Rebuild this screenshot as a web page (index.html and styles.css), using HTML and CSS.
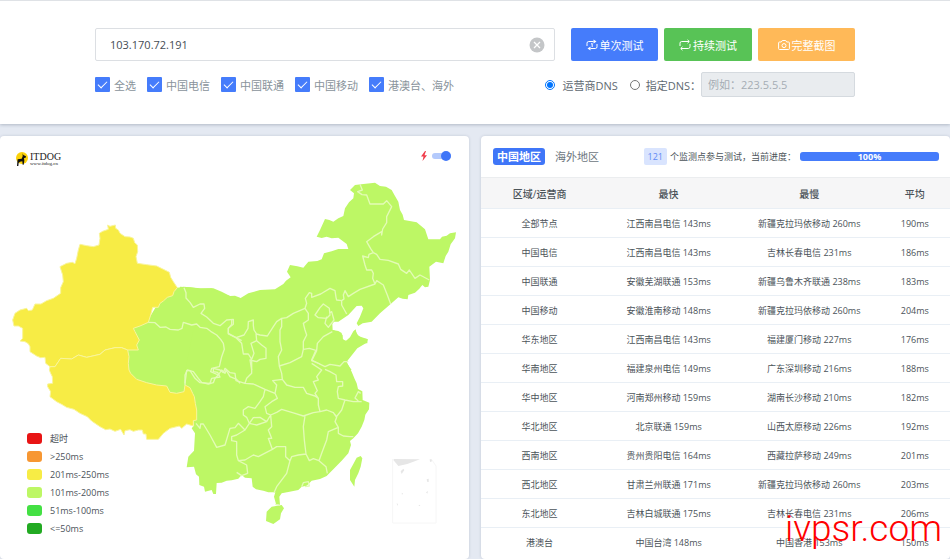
FILE: index.html
```
<!DOCTYPE html>
<html lang="zh-CN">
<head>
    <meta charset="UTF-8">
    <meta name="viewport" content="width=device-width, initial-scale=1.0">
    <title>ITDOG - Ping测试</title>
    <link rel="stylesheet" href="styles.css">
</head>
<body>
    <form class="search-panel">
        <div class="search-row">
            <div class="host-box">
                <input type="text" class="host-input" value="103.170.72.191" aria-label="测试地址">
                <button type="button" class="clear-btn" aria-label="清空">
                    <svg viewBox="0 0 16 16" width="16" height="16"><circle cx="8" cy="8" r="7.5" fill="#c4c6c8"/><path d="M5 5l6 6M11 5l-6 6" stroke="#fff" stroke-width="1.3" fill="none"/></svg>
                </button>
            </div>
            <div class="buttons">
                <button type="button" class="btn btn-blue">
                    <svg viewBox="0 0 12 12" width="12" height="12"><path d="M1 7V4.200Q1 2.500 2.700 2.500H7.500M11 5v2.800q0 1.700-1.700 1.700H4.500M5 5.200l1.200-.8v3.600"/><path class="solid" d="M7.500 .5v4l3-2zM4.500 7.500v4l-3-2z"/></svg>
                    单次测试
                </button>
                <button type="button" class="btn btn-green">
                    <svg viewBox="0 0 12 12" width="12" height="12"><path d="M1 7V4.200Q1 2.500 2.700 2.500H10M8.500 .8l1.800 1.700-1.800 1.700M11 5v2.800q0 1.700-1.700 1.700H2M3.500 7.800L1.700 9.500l1.800 1.700"/></svg>
                    持续测试
                </button>
                <button type="button" class="btn btn-orange">
                    <svg viewBox="0 0 12 12" width="12" height="12"><path d="M1.500 3H3.300L4.300 1.500H7.700L8.700 3H10.500Q11.400 3 11.400 3.900V9.600Q11.400 10.500 10.500 10.500H1.500Q.6 10.500 .6 9.600V3.900Q.6 3 1.500 3Z"/><circle cx="6" cy="6.600" r="2"/></svg>
                    完整截图
                </button>
            </div>
        </div>
        <div class="option-row">
            <div class="lines">
                <label><input type="checkbox" checked>全选</label>
                <label><input type="checkbox" checked>中国电信</label>
                <label><input type="checkbox" checked>中国联通</label>
                <label><input type="checkbox" checked>中国移动</label>
                <label><input type="checkbox" checked>港澳台、海外</label>
            </div>
            <div class="dns">
                <label><input type="radio" name="dns" checked>运营商DNS</label>
                <label><input type="radio" name="dns">指定DNS：</label>
                <input type="text" class="dns-input" placeholder="例如：223.5.5.5" aria-label="DNS" disabled>
            </div>
        </div>
    </form>

    <main class="content">
        <section class="card map-card">
            <div class="map-header">
                <a href="#" class="logo">
                    <svg viewBox="0 0 36 42" width="12" height="14"><circle cx="18" cy="18" r="18" fill="#fbd20b"/><path d="M20 4l2 5 8 4-1 4-5 1 1 8-2 12h-3l-1-10-7 1-4 3-1 10H3l1-12 1-8 12-2 3-7z" fill="#111"/></svg>
                    <span class="logo-text"><b>ITDOG</b><small>www.itdog.cn</small></span>
                </a>
                <label class="fast">
                    <svg viewBox="0 0 8 10" width="8" height="10"><path d="M5 0L1 5.500h2.500L2.500 10 7 4.200H4.500L6 0z" fill="#f03c4b"/></svg>
                    <input type="checkbox" class="switch" aria-label="快速模式" checked>
                </label>
            </div>
            <svg class="map" viewBox="0 528 1407 1149">
                <!-- 内地各省 -->
                <g class="level-200">
                    <path transform="translate(0 660)" d="M532 203L552 200 600 205 640 205 665 215 690 228 730 236 730 660 600 660 580 610 580 560 545 540 400 500 370 390 390 320 450 290 480 240 520 215z"/>
                    <path transform="translate(540 510)" d="M0 350L30 352 62 356 95 355 107 362 120 368 150 378 165 377 182 384 205 370 240 360 285 358 310 342 318 332 332 322 321 305 330 285 352 289 370 293 385 275 412 273 425 268 432 250 455 244 475 237 505 237 500 222 475 203 455 205 440 200 425 204 410 200 420 180 435 147 448 150 460 155 475 145 490 138 495 115 507 97 520 85 522 70 510 60 525 45 550 42 585 38 600 48 618 50 635 60 645 78 655 95 660 120 668 134 672 150 710 157 735 178 745 208 780 208 786 200 800 197 810 190 828 187 825 205 812 223 805 245 797 258 790 280 768 275 748 290 750 330 745 350 735 352 727 345 718 356 705 368 685 375 683 388 668 386 655 382 632 402 600 430 575 455 548 460 535 468 530 460 540 440 550 415 545 407 530 408 505 435 475 455 462 455 457 462 458 480 475 483 485 489 488 506 497 514 510 502 520 484 527 478 530 492 545 505 563 507 562 520 547 520 535 530 520 540 495 572 515 600 0 610z"/>
                    <path transform="translate(360 990)" d="M220 0H640L668 15 668 30 680 32 700 15 705 0 715 18 743 28 740 38 712 55 680 95 695 125 704 147 710 160 714 177 727 184 728 210 748 218 747 238 736 254 733 270 725 290 714 310 700 325 690 333 693 345 685 370 665 392 640 418 628 430 620 438 600 447 575 452 560 467 545 470 535 480 505 486 485 490 478 500 480 525 468 522 462 500 466 487 445 487 430 482 408 478 398 470 395 445 375 443 365 435 355 446 335 451 320 452 305 458 290 459 288 492 280 492 275 480 255 485 252 470 238 465 237 440 228 433 222 410 200 412 205 380 222 362 225 310 215 295 228 280 225 200 190 150z"/>
                    <path transform="translate(360 990)" d="M440 545L455 530 485 525 492 535 483 550 480 568 460 582 438 573z"/>
                    <path transform="translate(360 990)" d="M710 383L722 378 727 385 722 410 715 430 705 450 703 470 690 450 690 420 700 402z"/>
                </g>

                <!-- 新疆、西藏 -->
                <g class="level-250" transform="translate(0 660)">
                    <path d="M323 15L330 19 346 15 347 25 355 30 360 40 375 50 390 51 400 55 404 68 412 75 413 95 408 110 412 130 440 134 470 138 490 148 508 157 512 172 520 185 532 203 522 215 518 227 502 232 490 243 480 250 475 262 458 262 452 285 445 307 420 318 400 325 405 335 418 360 410 375 415 390 383 390 365 383 345 383 315 390 300 403 260 412 235 405 215 417 182 415 165 440 150 440 137 430 135 412 122 413 110 408 90 395 90 380 85 371 75 365 60 363 68 355 68 325 55 318 42 318 38 300 45 280 60 270 80 265 85 272 97 270 105 252 123 252 140 242 160 235 182 220 182 203 190 185 188 165 180 140 200 130 217 127 225 131 230 115 235 90 240 73 260 77 280 80 297 75 300 55 298 40 308 34 325 28z"/>
                    <path d="M150 440L165 440 182 415 215 417 235 405 260 412 300 403 315 390 345 383 365 383 383 390 387 410 385 430 387 450 392 460 410 478 440 488 470 495 500 498 510 517 530 520 552 515 555 495 570 503 578 520 583 530 586 550 590 570 590 600 580 602 580 618 560 612 545 625 538 618 510 625 490 640 475 658 440 658 438 642 430 642 427 630 415 630 400 634 390 629 375 632 372 645 362 628 345 634 330 627 317 629 300 620 275 603 262 590 240 580 222 568 200 562 185 553 170 545 150 530 152 515 143 500 143 492 158 490 157 470 152 460 148 450z"/>
                </g>

                <!-- 省界 -->
                <g class="border">
                    <path transform="translate(0 660)" d="M445 307L465 308 480 322 498 321 510 328 535 330 546 325 550 307 575 315 590 312 600 322 620 325 632 334 650 345 662 358 670 370 673 388 665 410 658 440 635 445 632 455 655 465 645 475 640 488 625 492 605 487 595 475 580 455 562 450 555 465 555 495M655 465L665 450 675 460 678 450 690 470 710 478 720 490M552 203L558 218 558 234 570 247 580 262 600 252 612 252 614 265 603 280 620 291 640 310 660 317 680 300 700 298 700 313 685 325 685 342 708 353 725 362"/>
                    <path transform="translate(540 510)" d="M155 448L155 463 145 475 145 490 168 503 192 495 204 475 205 455 220 450 220 467 222 480 230 492 240 495 262 498 280 470 290 455 305 445 320 443 340 430 375 415 380 400 376 385 388 368 395 370 395 382 422 372 450 355 465 362 468 382 470 390 485 392 492 387 490 375 495 362 505 380 520 370 540 358 585 342 578 325 580 310 575 300 560 300 555 285 548 258 565 263 567 253 580 248 572 236 560 215 580 200 605 185 605 195 608 177 620 158 620 140 635 110 620 92 610 102 570 102 560 75 546 74 533 65 547 60 540 43M580 248L590 253 600 268 625 271 655 282 662 298 680 310 688 300 705 325 720 315 748 330M585 342L590 332 610 345 622 375 632 402M168 503L185 520 190 552 205 552 215 568 222 550 213 520 230 512 228 490M230 512L245 525 258 535 258 565 240 568 230 575 210 570 215 600M305 445L305 470 300 480 300 515 305 540 295 560 298 588 330 578 365 560 370 538M375 415L385 430 385 450 370 460 375 480 380 495 370 515 370 538 388 535 410 542 412 520 430 500 457 485M405 435L420 413 430 402 448 415 450 435 440 445 415 443zM448 430L455 425 462 450 445 472 435 460 440 440M485 392L485 405 500 432M410 542L395 572 420 582"/>
                    <path transform="translate(360 990)" d="M195 160L200 122 210 122 225 145 240 158 270 160 275 145 300 141 293 127 280 125 280 115 300 120 310 128 315 115 330 128 345 130 348 152 375 160 400 162 435 178 430 200 420 215 405 235 385 230 370 240 370 255 380 262 388 280 400 263 420 262 440 275M395 90L395 130 380 145 375 160M435 178L465 190 470 165 458 152 487 148 485 130 478 108M487 148L500 165 525 172 550 172 560 190 585 198 595 205 595 225 600 245M465 190L472 205 455 215 435 230 440 250 452 255 470 247 485 238 525 250 550 258 580 248 600 245 620 240 640 248 650 260M388 280L410 285 440 275 452 255M452 255L455 290 445 300 455 325 445 325 457 358M555 258L550 290 553 330 558 372M457 358L470 350 497 350 497 380 510 392 515 380 535 375 558 372 568 392 580 386 597 392 605 370 620 330 625 305 655 292M640 248L650 262 645 275 655 292 655 310 670 318 690 320 700 320M648 262L665 240 675 210 700 215 725 215M675 210L655 205 652 185 655 170 668 168 668 155 650 155 648 135 630 125 615 118M575 100L605 120 590 140 595 150 580 155 592 182 585 190 595 205M587 62L575 90 615 110 630 103 660 108 672 95 685 95M715 213L705 204 715 185 722 190M510 392L500 430 470 470 462 488M597 392L618 410 622 430M355 392L375 390 400 375 415 380 457 358M228 280L240 295 242 282 250 282 270 315 290 352 315 345 330 295 345 293 355 280 375 300 388 280M375 300L350 315 335 320 335 332 350 335 350 375 355 392 380 405 383 430 365 437 350 427M545 470L550 458 565 455 568 468 555 470M466 523L480 526"/>
                </g>

                <!-- 南海诸岛 -->
                <g class="sea" transform="translate(360 990)">
                    <path d="M820 390L822 387 900 388 862 402 835 408z"/>
                    <path d="M842 424l8-8 3 4-8 12zM920 448l6-2v10h-4zM918 487l6-4-2 8zM845 488l4 2-3 5zM830 520l4 2-2 6zM895 528l4-4 2 4zM929 388l6 0 1 6-6 2z"/>
                    <path class="sea-frame" d="M818 387V579H948V408L936 390"/>
                </g>
            </svg>
            <ul class="legend">
                <li><i class="c-timeout"></i>超时</li>
                <li><i class="c-over"></i>&gt;250ms</li>
                <li><i class="c-250"></i>201ms-250ms</li>
                <li><i class="c-200"></i>101ms-200ms</li>
                <li><i class="c-100"></i>51ms-100ms</li>
                <li><i class="c-50"></i>&lt;=50ms</li>
            </ul>
        </section>

        <section class="card result-card">
            <div class="result-header">
                <button type="button" class="tab active">中国地区</button>
                <button type="button" class="tab">海外地区</button>
                <span class="badge">121</span>
                <span class="status">个监测点参与测试，当前进度：</span>
                <div class="progress" role="progressbar" aria-valuenow="100" aria-label="当前进度">
                    <div class="progress-bar" style="width: 100%">100%</div>
                </div>
            </div>
            <table>
                <thead>
                    <tr><th>区域/运营商</th><th>最快</th><th>最慢</th><th>平均</th></tr>
                </thead>
                <tbody>
                    <tr><td>全部节点</td><td>江西南昌电信 143ms</td><td>新疆克拉玛依移动 260ms</td><td>190ms</td></tr>
                    <tr><td>中国电信</td><td>江西南昌电信 143ms</td><td>吉林长春电信 231ms</td><td>186ms</td></tr>
                    <tr><td>中国联通</td><td>安徽芜湖联通 153ms</td><td>新疆乌鲁木齐联通 238ms</td><td>183ms</td></tr>
                    <tr><td>中国移动</td><td>安徽淮南移动 148ms</td><td>新疆克拉玛依移动 260ms</td><td>204ms</td></tr>
                    <tr><td>华东地区</td><td>江西南昌电信 143ms</td><td>福建厦门移动 227ms</td><td>176ms</td></tr>
                    <tr><td>华南地区</td><td>福建泉州电信 149ms</td><td>广东深圳移动 216ms</td><td>188ms</td></tr>
                    <tr><td>华中地区</td><td>河南郑州移动 159ms</td><td>湖南长沙移动 210ms</td><td>182ms</td></tr>
                    <tr><td>华北地区</td><td>北京联通 159ms</td><td>山西太原移动 226ms</td><td>192ms</td></tr>
                    <tr><td>西南地区</td><td>贵州贵阳电信 164ms</td><td>西藏拉萨移动 249ms</td><td>201ms</td></tr>
                    <tr><td>西北地区</td><td>甘肃兰州联通 171ms</td><td>新疆克拉玛依移动 260ms</td><td>203ms</td></tr>
                    <tr><td>东北地区</td><td>吉林白城联通 175ms</td><td>吉林长春电信 231ms</td><td>206ms</td></tr>
                    <tr><td>港澳台</td><td>中国台湾 148ms</td><td>中国香港 153ms</td><td>150ms</td></tr>
                </tbody>
            </table>
            <div class="watermark">ivpsr.com</div>
        </section>
    </main>
</body>
</html>
```
FILE: styles.css
```
* {
    box-sizing: border-box;
}
body {
    margin: 0;
    background-color: #e4e9f2;
    font-family: "Open Sans", "Noto Sans CJK SC", sans-serif;
    font-size: 11px;
    color: #4b5359;
}
input, button {
    font-family: inherit;
    font-size: 11px;
}
button {
    padding: 0;
    border: none;
    background: none;
    cursor: pointer;
}

/* 顶部 */
.search-panel {
    padding: 27px 10% 27px;
    background: #fff;
    border-top: 1px solid #dfe2e6;
    box-shadow: 0 1px 3px rgba(60, 75, 100, 0.3);
}
.search-row {
    display: flex;
    gap: 16px;
}
.host-box {
    position: relative;
    flex: 1;
}
.host-input {
    width: 100%;
    height: 33px;
    padding: 0 40px 0 14px;
    border: 1px solid #dcdfe3;
    border-radius: 2px;
    color: #454d54;
}
.clear-btn {
    position: absolute;
    top: 9px;
    right: 10px;
    width: 16px;
    height: 16px;
}
.clear-btn svg {
    display: block;
}
.buttons {
    display: flex;
    gap: 6px;
}
.btn {
    display: flex;
    align-items: center;
    justify-content: center;
    gap: 2px;
    width: 88px;
    height: 33px;
    border-radius: 2px;
    color: #fff;
}
.btn svg {
    fill: none;
    stroke: #fff;
}
.btn .solid {
    fill: #fff;
    stroke: none;
}
.btn-blue {
    width: 87px;
    background: #457cfb;
}
.btn-green {
    background: #58c356;
}
.btn-orange {
    width: 97px;
    background: #ffb958;
}
.option-row {
    display: flex;
    justify-content: space-between;
    align-items: center;
    margin-top: 11px;
}
.lines, .dns, .option-row label {
    display: flex;
    align-items: center;
}
.lines {
    gap: 11px;
    color: #89939b;
}
.lines label {
    gap: 4px;
}
.lines input {
    appearance: none;
    width: 15px;
    height: 15px;
    margin: 0;
    border-radius: 1px;
    background: #457cfb;
    display: grid;
    place-items: center;
}
.lines input:checked::before {
    content: "";
    width: 8px;
    height: 4px;
    margin-bottom: 3px;
    border-left: 1px solid #fff;
    border-bottom: 1px solid #fff;
    transform: rotate(-45deg);
}
.dns {
    color: #5f6a72;
}
.dns label {
    gap: 7px;
    margin-right: 12px;
}
.dns label + label {
    gap: 6px;
    margin-right: 0;
}
.dns input[type="radio"] {
    width: 10px;
    height: 10px;
    margin: 0;
}
.dns-input {
    width: 154px;
    height: 25px;
    padding: 0 6px;
    border: 1px solid #d5dadf;
    border-radius: 2px;
    background: #e9ecef;
}
.dns-input::placeholder {
    color: #a5adb4;
}

/* 内容 */
.content {
    display: grid;
    grid-template-columns: 1fr 1fr;
    gap: 12px;
    margin-top: 12px;
}
.card {
    position: relative;
    background: #fff;
    border-radius: 4px;
    box-shadow: 0 0 3px rgba(60, 75, 100, 0.2);
}

/* 地图 */
.map-header {
    display: flex;
    justify-content: space-between;
    align-items: center;
    height: 40px;
    padding: 0 18px 0 16px;
}
.logo {
    display: flex;
    align-items: center;
    gap: 2px;
    padding-top: 6px;
    color: #222;
    text-decoration: none;
}
.logo-text {
    display: flex;
    flex-direction: column;
    font-family: "Liberation Serif", serif;
    line-height: 8px;
}
.logo-text b {
    font-size: 10px;
    font-weight: normal;
}
.logo-text small {
    font-size: 5px;
    line-height: 5px;
}
.fast {
    display: flex;
    align-items: center;
    gap: 4px;
}
.switch {
    appearance: none;
    display: flex;
    align-items: center;
    justify-content: flex-end;
    width: 19px;
    height: 6px;
    margin: 0;
    border-radius: 3px;
    background: #b4cafc;
}
.switch::before {
    content: "";
    width: 10px;
    height: 10px;
    border-radius: 50%;
    background: #3f76f8;
}
.map {
    display: block;
    width: 100%;
}
.level-200 {
    fill: #bdf765;
}
.level-250 {
    fill: #f7ec45;
    stroke: #f9f59b;
    stroke-width: 3;
}
.border {
    fill: none;
    stroke: #e3fbb6;
    stroke-width: 4;
    stroke-linejoin: round;
}
.sea {
    fill: #e6e6e6;
}
.sea-frame {
    fill: none;
    stroke: #f6f6f6;
    stroke-width: 3;
}
.legend {
    position: absolute;
    left: 27px;
    bottom: 24px;
    display: grid;
    gap: 5px;
    margin: 0;
    padding: 0;
    list-style: none;
    font-size: 9px;
}
.legend li {
    display: flex;
    align-items: center;
    gap: 8px;
    line-height: 13px;
}
.legend i {
    width: 15px;
    height: 11px;
    border-radius: 3px;
}
.c-timeout {
    background: #e81414;
}
.c-over {
    background: #f79733;
}
.c-250 {
    background: #f7ec45;
}
.c-200 {
    background: #bdf765;
}
.c-100 {
    background: #43e043;
}
.c-50 {
    background: #22aa22;
}

/* 结果 */
.result-header {
    display: flex;
    align-items: center;
    height: 41px;
    padding: 0 11px 0 12px;
    font-size: 9px;
    white-space: nowrap;
}
.tab {
    height: 17px;
    padding: 0 4px;
    border-radius: 3px;
    color: #6d767d;
    line-height: 17px;
}
.tab.active {
    margin-right: 6px;
    background: #3f76f8;
    color: #fff;
    font-weight: bold;
}
.badge {
    margin: 0 3px 0 auto;
    padding: 0 4px;
    border-radius: 2px;
    background: #d9e4fe;
    color: #5f8bf5;
    line-height: 17px;
}
.progress {
    width: 139px;
    height: 9px;
    margin-left: 4px;
    border-radius: 3px;
    background: #e9ecef;
}
.progress-bar {
    height: 100%;
    border-radius: 3px;
    background: #457cfb;
    color: #fff;
    font-weight: bold;
    line-height: 9px;
    text-align: center;
}
table {
    width: 100%;
    border-collapse: collapse;
    table-layout: fixed;
    text-align: center;
}
th, td {
    height: 29px;
    padding: 0;
    border-bottom: 1px solid #e9eff5;
    font-size: 9px;
    white-space: nowrap;
}
th {
    height: 31px;
    width: 30%;
    border-top: 1px solid #ebedef;
    background: #f6f6f7;
    font-size: 10px;
    font-weight: 500;
}
th:first-child {
    width: 25%;
}
th:last-child {
    width: 15%;
}
tbody tr:last-child td {
    border-bottom: none;
}
.watermark {
    position: absolute;
    right: 8px;
    bottom: 5px;
    color: #f00;
    font-family: Roboto, "Liberation Sans", sans-serif;
    font-size: 37px;
    font-weight: 300;
    line-height: 50px;
}
```
